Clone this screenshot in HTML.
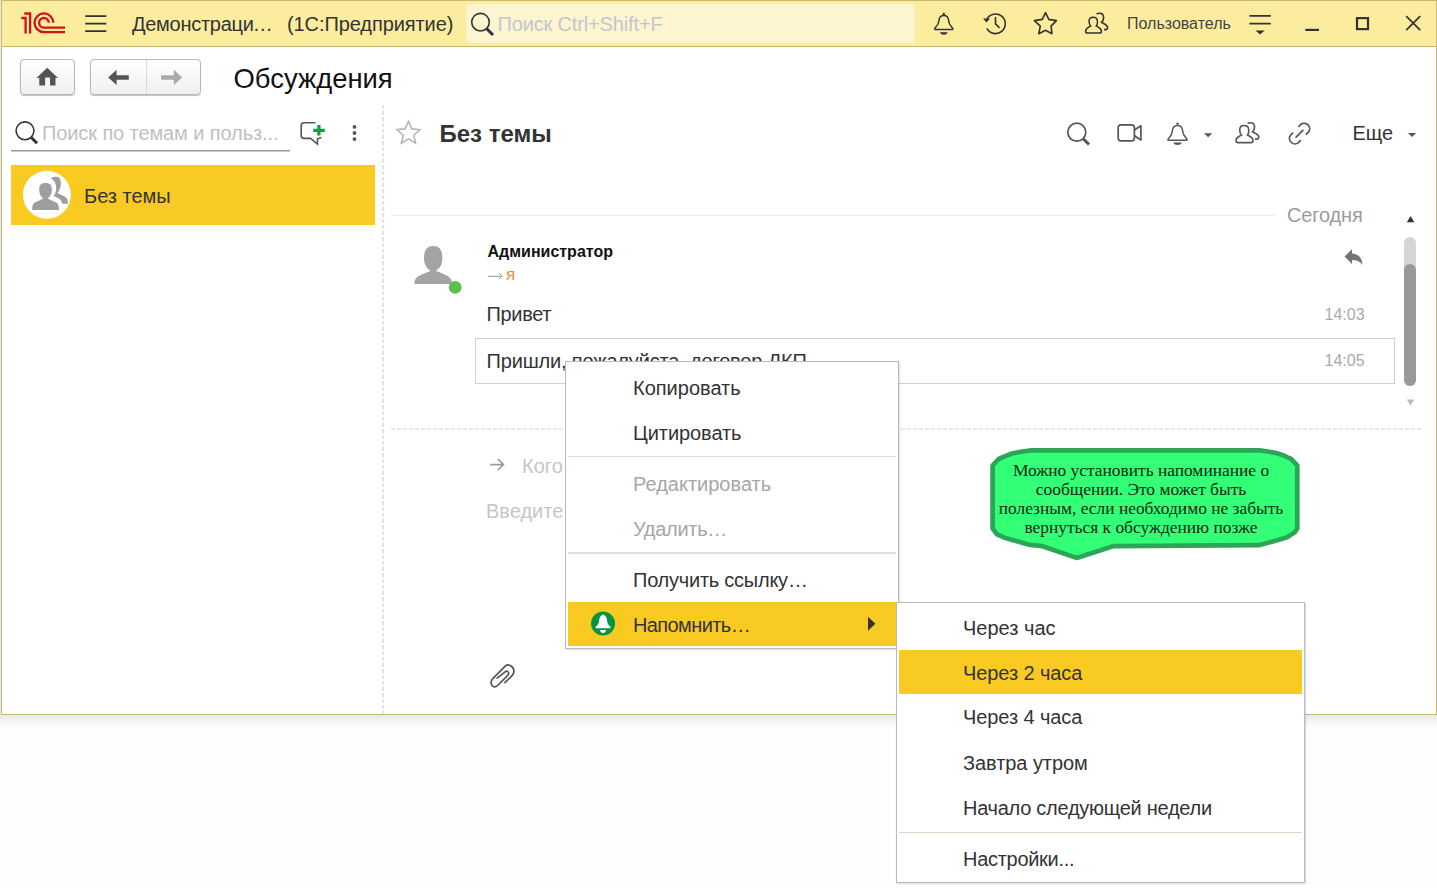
<!DOCTYPE html>
<html><head><meta charset="utf-8">
<style>
*{box-sizing:border-box;margin:0;padding:0}
html,body{width:1437px;height:888px;overflow:hidden;background:#fefefe;font-family:"Liberation Sans",sans-serif;color:#333}
.a{position:absolute}
.t{position:absolute;white-space:nowrap;line-height:1}
svg{position:absolute;overflow:visible}
#win{position:absolute;left:1px;top:0;width:1436px;height:715px;background:#fff;border:1px solid #c9b872}
#shadow{position:absolute;left:0;top:715px;width:1437px;height:12px;background:linear-gradient(#e9e9eb,rgba(254,254,254,0))}
#hdr{position:absolute;left:1px;top:0;width:1436px;height:47px;background:#fbec9e;border:1px solid #c9b872}
.btn{position:absolute;border:1px solid #b8b8b8;border-radius:4px;background:linear-gradient(#ffffff,#f0f0f0);box-shadow:0 1px 1px rgba(0,0,0,.25)}
.mi{position:absolute;font-size:20px;line-height:1;white-space:nowrap;color:#333;transform:scaleY(1.05);transform-origin:0 16.93px}
.t20{transform:scaleY(1.05);transform-origin:0 16.93px}
</style></head><body>
<div id="shadow"></div>
<div id="win"></div>
<div id="hdr"></div>
<div class="a" style="left:0;top:0;width:1px;height:715px;background:#e6e8ee"></div>

<!-- ===== HEADER ===== -->
<svg style="left:0;top:0" width="1437" height="47" viewBox="0 0 1437 47">
  <g fill="none" stroke="#d4101b" stroke-width="2.3">
    <path d="M21.3,18 H25.6 V33.5 M24.3,13.5 H30.1 V33.5"/>
    <path d="M53.25,22.8 A9.35,9.35 0 1 0 43.9,32.15 H65"/>
    <path d="M48.7,22.8 A4.8,4.8 0 1 0 43.9,27.6 H65"/>
  </g>
  <g stroke="#333" stroke-width="1.7">
    <path d="M85.2,16.1 H106.3 M85.2,23.6 H106.3 M85.2,31.2 H106.3"/>
  </g>
  <rect x="466" y="4" width="449" height="39" rx="4" fill="#fdf5d2"/>
  <g fill="none" stroke="#333" stroke-width="1.6">
    <circle cx="480.5" cy="22.2" r="8.8"/>
  </g>
  <path d="M486.5,28.5 L493,35" stroke="#333" stroke-width="3"/>
  <!-- bell -->
  <g fill="none" stroke="#333" stroke-width="1.5">
    <path d="M943.8,15.6 C940.5,15.6 939.2,17.5 939,20.5 C938.8,24 937.5,25.5 935.5,27.5 C934.3,28.7 934.3,29.6 935.5,29.6 L952,29.6 C953.2,29.6 953.2,28.7 952,27.5 C950,25.5 948.8,24 948.6,20.5 C948.4,17.5 947.1,15.6 943.8,15.6 Z"/>
  </g>
  <circle cx="943.8" cy="14" r="1.2" fill="#333"/>
  <path d="M939.7,32.3 H947.9 Q946.5,34.8 943.8,34.8 Q941.1,34.8 939.7,32.3 Z" fill="#333"/>
  <!-- history -->
  <g fill="none" stroke="#333" stroke-width="1.6">
    <path d="M986.85,19.2 A9.8,9.8 0 1 1 986.85,28.4"/>
    <path d="M995.5,17 V23.8 L999.6,27.9"/>
  </g>
  <path d="M983,18.5 H990 L986.5,22.5 Z" fill="#333"/>
  <!-- star -->
  <path d="M1045.5,12.7 L1048.8,19.4 L1056.4,20.6 L1051.1,26.1 L1052,33.7 L1045.5,30.2 L1038.8,33.7 L1040.3,26.1 L1034.4,20.6 L1042.3,19.4 Z" fill="none" stroke="#333" stroke-width="1.6" stroke-linejoin="round"/>
  <!-- users -->
  <g fill="none" stroke="#333" stroke-width="1.6">
    <path transform="translate(1093.3,32.8) scale(0.93) translate(-1093.3,-32.8)" d="M1090.5,25.5 C1088,27 1085,28 1085,31 Q1085,33 1087,33 H1100 Q1102,33 1102,31 C1102,28 1099,27 1096.5,25.5 C1098,24 1097.7,22 1097.7,20.5 C1097.7,17.5 1095.5,16 1093.2,16 C1090.9,16 1088.7,17.5 1088.7,20.5 C1088.7,22 1089,24 1090.5,25.5 Z"/>
    <path d="M1096.6,14 C1097.5,13.4 1098.5,13.3 1099.5,13.3 C1102,13.3 1103.6,15 1103.6,17.8 C1103.6,19.5 1103,21 1101.5,22.3 C1104,23.8 1107.6,25 1107.6,27.6 Q1107.6,29.6 1105.5,29.6 H1104"/>
  </g>
  <!-- menu filter -->
  <g stroke="#333" stroke-width="1.7">
    <path d="M1249.4,15.8 H1270.8 M1249.4,23.7 H1270.8"/>
  </g>
  <path d="M1255.5,30.6 H1264.7 L1260.1,34.6 Z" fill="#333"/>
  <!-- min max close -->
  <path d="M1305.3,29.9 H1319" stroke="#333" stroke-width="2.2"/>
  <rect x="1357" y="18.1" width="11" height="11" fill="none" stroke="#333" stroke-width="2.2"/>
  <path d="M1406.2,16.2 L1420.2,30.2 M1420.2,16.2 L1406.2,30.2" stroke="#333" stroke-width="1.7"/>
</svg>
<div class="t t20" style="left:132px;top:13.5px;font-size:20px;color:#333;letter-spacing:-0.28px">Демонстраци<span style="margin-left:-0.8px">…</span></div>
<div class="t t20" style="left:287px;top:13.6px;font-size:20px;color:#333;letter-spacing:-0.09px">(1С:Предприятие)</div>
<div class="t t20" style="left:497.5px;top:13.8px;font-size:20px;color:#c3c6cc;letter-spacing:-0.15px">Поиск Ctrl+Shift+F</div>
<div class="t" style="left:1127px;top:16px;font-size:16px;color:#444">Пользователь</div>

<!-- ===== NAV ===== -->
<div class="btn" style="left:20px;top:59px;width:55px;height:36px"></div>
<div class="btn" style="left:90px;top:59px;width:111px;height:36px"></div>
<div class="a" style="left:145.5px;top:60px;width:1.5px;height:34px;background:#dadada"></div>
<svg style="left:0;top:0" width="1" height="1" viewBox="0 0 1 1">
  <path d="M47.2,67.8 L58,78 H55.5 V85.4 H50 V77.6 H45.1 V85.4 H39.3 V78 H36.5 Z" fill="#555"/>
  <path d="M108.2,77.4 L116.6,69.7 V75.3 H128.8 V79.8 H116.6 V85 Z" fill="#555"/>
  <path d="M182.2,77.4 L173.8,69.7 V75.3 H161.1 V79.8 H173.8 V85 Z" fill="#aaa"/>
</svg>
<div class="t" style="left:233.5px;top:64.6px;font-size:27.4px;color:#111">Обсуждения</div>


<!-- ===== LEFT PANEL ===== -->
<svg style="left:0;top:0" width="1" height="1" viewBox="0 0 1 1">
  <circle cx="25" cy="130.8" r="8.9" fill="none" stroke="#333" stroke-width="1.6"/>
  <path d="M30.8,137 L37,143.3" stroke="#333" stroke-width="3"/>
  <path d="M11,150.7 H290" stroke="#999" stroke-width="1.5"/>
  <!-- new chat -->
  <path d="M315.5,122.8 H304 Q301.2,122.8 301.2,125.6 V135.6 Q301.2,138.4 304,138.4 H310.5 L317.5,144 V138.8 L321.5,137.5" fill="none" stroke="#555" stroke-width="1.6"/>
  <path d="M318.9,125 V135.6 M313.2,130.3 H324.8" stroke="#12a043" stroke-width="3.2"/>
  <circle cx="354.5" cy="126.9" r="1.9" fill="#555"/>
  <circle cx="354.5" cy="133" r="1.9" fill="#555"/>
  <circle cx="354.5" cy="139.1" r="1.9" fill="#555"/>
</svg>
<div class="t t20" style="left:42px;top:123px;font-size:20px;color:#c0c0c0;letter-spacing:-0.1px">Поиск по темам и польз...</div>
<div class="a" style="left:382px;top:105px;width:2px;height:609px;background:repeating-linear-gradient(180deg,#e4e4e4 0 4px,transparent 4px 6px)"></div>
<div class="a" style="left:11px;top:165px;width:364px;height:60px;background:#f9cb22"></div>
<svg style="left:0;top:0" width="1" height="1" viewBox="0 0 1 1">
  <circle cx="46.9" cy="194.8" r="24" fill="#fff"/>
  <path d="M43.4,198.3 C40.5,196.5 39.2,193.5 39.2,189.5 C39.2,185 41,182.9 45.5,182.9 C50,182.9 51.9,185 51.9,189.5 C51.9,193.5 50.5,196.5 47.6,198.3 C50,200 54.5,201.5 57,203 C58.5,204.2 58.9,206 58.9,210 H32.2 C32.2,206 32.6,204.2 34.1,203 C36.6,201.5 41,200 43.4,198.3 Z" fill="#9e9e9e"/>
  <path d="M50.5,178.2 C52.5,177 54.5,176.8 56.5,176.8 C59.5,176.8 60.9,179.5 60.9,183.5 C60.9,187.5 59.5,190.5 57.5,193 C60,194.5 64.5,196 66.5,198 C67.8,199.5 67.8,201.5 67.8,203.8 H62.2 C61.8,201.5 60.5,199.5 58.5,198.3 C57,197.4 55,196.6 53.5,196.2 C55,194 56.2,191.5 56.2,188 C56.2,184 54.5,180 50.5,178.2 Z" fill="#9e9e9e"/>
</svg>
<div class="t t20" style="left:84px;top:186px;font-size:20px;color:#333">Без темы</div>

<!-- ===== CHAT HEADER ===== -->
<svg style="left:0;top:0" width="1" height="1" viewBox="0 0 1 1">
  <path d="M408.5,121.3 L411.8,128.9 L420,129.7 L413.8,135.2 L415.6,143.2 L408.5,139 L401.4,143.2 L403.2,135.2 L397,129.7 L405.2,128.9 Z" fill="none" stroke="#b4b8bd" stroke-width="1.6"/>
  <!-- search -->
  <circle cx="1076.8" cy="132.2" r="9" fill="none" stroke="#555" stroke-width="1.7"/>
  <path d="M1083,138.5 L1089,144.5" stroke="#555" stroke-width="3"/>
  <!-- video -->
  <rect x="1118.2" y="124.8" width="16.2" height="16" rx="2.8" fill="none" stroke="#555" stroke-width="1.7"/>
  <path d="M1134.4,130 L1140.9,125.8 V140 L1134.4,135.8" fill="none" stroke="#555" stroke-width="1.7" stroke-linejoin="round"/>
  <!-- bell -->
  <path d="M1177.5,125.5 C1174,125.5 1172.6,127.5 1172.4,130.8 C1172.2,134.5 1171,136 1168.8,138.2 C1167.6,139.4 1167.6,140.3 1168.8,140.3 H1186.2 C1187.4,140.3 1187.4,139.4 1186.2,138.2 C1184,136 1182.8,134.5 1182.6,130.8 C1182.4,127.5 1181,125.5 1177.5,125.5 Z" fill="none" stroke="#555" stroke-width="1.5"/>
  <circle cx="1177.5" cy="123.8" r="1.2" fill="#555"/>
  <path d="M1173,142.5 H1182 Q1180.5,145 1177.5,145 Q1174.5,145 1173,142.5 Z" fill="#555"/>
  <path d="M1204,133.2 H1212.3 L1208.15,137.2 Z" fill="#555"/>
  <!-- users -->
  <g fill="none" stroke="#555" stroke-width="1.6">
    <path d="M1241.5,135 C1239,136.5 1236,137.5 1236,140.5 Q1236,142.6 1238,142.6 H1251 Q1253,142.6 1253,140.5 C1253,137.5 1250,136.5 1247.5,135 C1249,133.5 1248.7,131.5 1248.7,130 C1248.7,127 1246.5,125.5 1244.2,125.5 C1241.9,125.5 1239.7,127 1239.7,130 C1239.7,131.5 1240,133.5 1241.5,135 Z"/>
    <path d="M1247.6,123.5 C1248.5,122.9 1249.5,122.8 1250.5,122.8 C1253,122.8 1254.6,124.5 1254.6,127.3 C1254.6,129 1254,130.5 1252.5,131.8 C1255,133.3 1258.8,134.5 1258.8,137.1 Q1258.8,139.1 1256.5,139.1 H1255"/>
  </g>
  <!-- link -->
  <g fill="none" stroke="#555" stroke-width="1.7" stroke-linecap="round">
    <path d="M1298.8,126.5 L1300.8,124.5 A5.4,5.4 0 0 1 1308.4,132.1 L1306.4,134.1"/>
    <path d="M1292.7,133 L1290.7,135 A5.4,5.4 0 0 0 1298.3,142.6 L1300.3,140.6"/>
    <path d="M1296.1,137.1 L1302.9,130.4"/>
  </g>
  <path d="M1408,133 H1416.2 L1412.1,137 Z" fill="#555"/>
</svg>
<div class="t" style="left:439.5px;top:121.7px;font-size:24px;font-weight:bold;color:#333">Без темы</div>
<div class="t t20" style="left:1352.5px;top:123.3px;font-size:20px;color:#333">Еще</div>


<!-- ===== MESSAGES ===== -->
<div class="a" style="left:391px;top:215px;width:884px;height:1px;background:#ececec"></div>
<div class="t t20" style="left:1287px;top:205px;font-size:20px;color:#9b9b9b;letter-spacing:-0.15px">Сегодня</div>
<svg style="left:0;top:0" width="1" height="1" viewBox="0 0 1 1">
  <path d="M1406.8,222.3 L1410.55,216 L1414.3,222.3 Z" fill="#333"/>
  <path d="M1406.8,399.5 L1410.55,405.8 L1414.3,399.5 Z" fill="#bbb"/>
  <!-- person -->
  <path d="M430.5,270.8 C427,268.5 424,265 424,258 C424,250 427,246 433.2,246 C439.4,246 442.4,250 442.4,258 C442.4,265 439.4,268.5 435.9,270.8 C439,272.5 445.5,274.5 449,277 C451.5,279 452,281.5 452,284 H414.4 C414.4,281.5 414.9,279 417.4,277 C420.9,274.5 427.4,272.5 430.5,270.8 Z" fill="#a3a3a3"/>
  <circle cx="455.2" cy="287.3" r="6.4" fill="#5ac24a"/>
  <!-- reply -->
  <path d="M1344.5,256.5 L1352,249.2 V253.5 C1358,253.8 1362.4,257.5 1362.4,265 C1360.5,261.5 1357,260 1352,260 V264 Z" fill="#747474"/>
</svg>
<div class="a" style="left:1403.6px;top:237px;width:12.9px;height:148.5px;border-radius:6.5px;background:#d5d5d5"></div>
<div class="a" style="left:1403.6px;top:264px;width:12.9px;height:121.5px;border-radius:6.5px;background:#999"></div>
<div class="t" style="left:487.5px;top:243.7px;font-size:16px;font-weight:bold;color:#111">Администратор</div>
<div class="t" style="left:506px;top:265.8px;font-size:17px;color:#f39131">я</div>
<svg style="left:0;top:0" width="1" height="1" viewBox="0 0 1 1"><path d="M488,276.3 H502 M499,273.6 L502.2,276.3 L499,279" fill="none" stroke="#999" stroke-width="1"/></svg>
<div class="t t20" style="left:486.5px;top:304.3px;font-size:20px;color:#333;letter-spacing:-0.34px">Привет</div>
<div class="t" style="left:1324.5px;top:306.9px;font-size:16px;color:#aaa">14:03</div>
<div class="a" style="left:475px;top:338px;width:920px;height:46px;border:1.5px solid #cfcfcf"></div>
<div class="t t20" style="left:486.5px;top:350.6px;font-size:20px;color:#333;letter-spacing:-0.17px">Пришли, пожалуйста, договор ДКП</div>
<div class="t" style="left:1324.5px;top:352.5px;font-size:16px;color:#aaa">14:05</div>

<!-- ===== COMPOSER ===== -->
<div class="a" style="left:391px;top:428px;width:1030px;height:2px;background:repeating-linear-gradient(90deg,#e6e6e6 0 4px,transparent 4px 6px)"></div>
<svg style="left:0;top:0" width="1" height="1" viewBox="0 0 1 1">
  <path d="M490,464.6 H503.5 M497.8,459 L503.5,464.6 L497.8,470.2" fill="none" stroke="#999" stroke-width="1.6"/>
  <path d="M504.46,683.21 L512.06,675.61 C514.8,672.9 514.3,668.3 511.5,666.2 C509.5,664.7 507,664.5 505.47,665.98 L492.8,678.65 C490.3,681.2 490.6,684.6 492.8,686.2 C494.5,687.3 496.5,686.6 497.87,685.24 L508,675.1 C509,674.1 508.8,672.3 507.8,671.6 C507,671 506,671 505.47,671.55 L496.55,678.65" fill="none" stroke="#555" stroke-width="1.7"/>
</svg>
<div class="t t20" style="left:522px;top:455.6px;font-size:20px;color:#c6c6c6">Кого</div>
<div class="t t20" style="left:486px;top:500.5px;font-size:20px;color:#c6c6c6">Введите</div>


<!-- ===== CONTEXT MENU ===== -->
<div class="a" style="left:565px;top:361px;width:334px;height:288px;background:#fff;border:1px solid #b9b9b9;box-shadow:1px 1px 2px rgba(0,0,0,.12)"></div>
<div class="a" style="left:568px;top:456.3px;width:328px;height:1.2px;background:#e4e0d4"></div>
<div class="a" style="left:568px;top:552.4px;width:328px;height:1.2px;background:#e4e0d4"></div>
<div class="a" style="left:568px;top:601.5px;width:328px;height:44px;background:#f9cb22"></div>
<div class="mi" style="left:633px;top:377.6px">Копировать</div>
<div class="mi" style="left:633px;top:422.6px;letter-spacing:-0.08px">Цитировать</div>
<div class="mi" style="left:633px;top:474.1px;color:#a6a6a6">Редактировать</div>
<div class="mi" style="left:633px;top:519px;color:#a6a6a6;letter-spacing:-0.29px">Удалить…</div>
<div class="mi" style="left:633px;top:569.5px;letter-spacing:-0.24px">Получить ссылку…</div>
<div class="mi" style="left:633px;top:614.5px;letter-spacing:-0.60px">Напомнить…</div>
<svg style="left:0;top:0" width="1" height="1" viewBox="0 0 1 1">
  <circle cx="603.05" cy="623.6" r="12" fill="#069540"/>
  <path d="M603.1,614.5 C601,615.5 599.3,617 599.1,620.5 C598.9,623.5 598,625 596,626.5 C595.3,627.2 595.4,628.2 596.3,628.2 H609.9 C610.8,628.2 610.9,627.2 610.2,626.5 C608.2,625 607.3,623.5 607.1,620.5 C606.9,617 605.2,615.5 603.1,614.5 Z" fill="#fff"/>
  <path d="M599.9,630 H606.2 Q605.5,633 603.05,633 Q600.6,633 599.9,630 Z" fill="#fff"/>
  <path d="M868,616.8 L875.4,623.75 L868,630.7 Z" fill="#333"/>
</svg>

<!-- ===== SUBMENU ===== -->
<div class="a" style="left:896px;top:602px;width:409px;height:281px;background:#fff;border:1px solid #b9b9b9;box-shadow:1px 1px 2px rgba(0,0,0,.15)"></div>
<div class="a" style="left:899px;top:649.8px;width:403px;height:44px;background:#f9cb22"></div>
<div class="a" style="left:899px;top:832px;width:403px;height:1px;background:#dcd8c6"></div>
<div class="mi" style="left:963px;top:617.6px">Через час</div>
<div class="mi" style="left:963px;top:662.8px;letter-spacing:-0.09px">Через 2 часа</div>
<div class="mi" style="left:963px;top:707.4px;letter-spacing:-0.09px">Через 4 часа</div>
<div class="mi" style="left:963px;top:753px;letter-spacing:-0.06px">Завтра утром</div>
<div class="mi" style="left:963px;top:797.7px;letter-spacing:-0.27px">Начало следующей недели</div>
<div class="mi" style="left:963px;top:849px;letter-spacing:-0.29px">Настройки...</div>

<!-- ===== BUBBLE ===== -->
<svg style="left:0;top:0" width="1" height="1" viewBox="0 0 1 1">
  <path d="M992.6,465.5 L998.6,459 L1004,456.6 L1012.6,453.3 L1022.3,451.5 L1031.4,450.45 L1259.5,450.45 L1267.7,451.5 L1277,453.3 L1283,455.2 L1287.5,457.3 L1291.2,458.9 L1297.3,465.6 L1297.3,528.6 L1294.6,532.4 L1287.1,537.3 L1276.5,540.5 L1258.7,545.2 L1113.7,546.05 L1076.6,557.9 L1042.5,546.2 L1030.3,544.9 L1005.4,538.1 L996.6,534 L992.6,528.4 Z" fill="#33ff77" stroke="#2ba656" stroke-width="4.7" stroke-linejoin="round"/>
</svg>
<div class="a" style="left:990px;top:461.4px;width:302px;text-align:center;font-family:'Liberation Serif',serif;font-size:17.4px;line-height:19px;color:#0b2813">Можно установить напоминание о<br>сообщении. Это может быть<br>полезным, если необходимо не забыть<br>вернуться к обсуждению позже</div>

</body></html>
